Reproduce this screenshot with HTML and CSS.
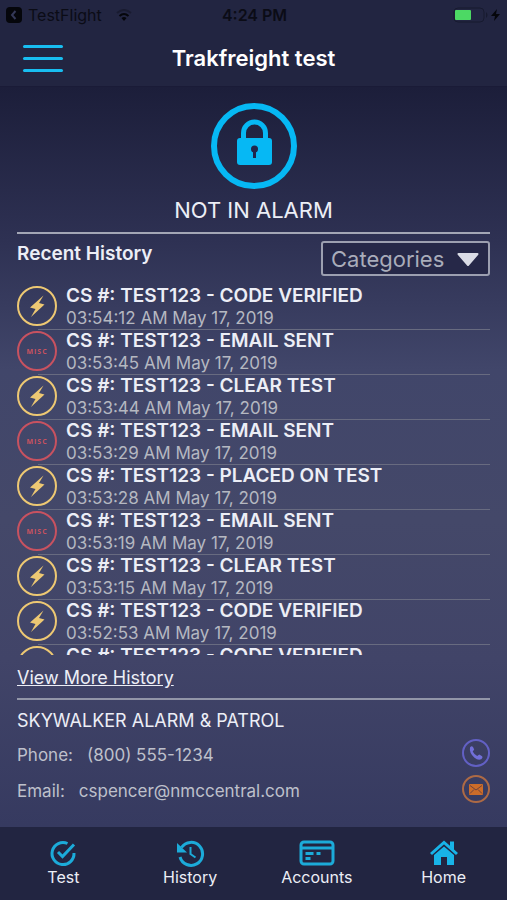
FILE: index.html
```html
<!DOCTYPE html>
<html lang="en">
<head>
<meta charset="utf-8">
<meta name="viewport" content="width=device-width, initial-scale=1">
<title>Trakfreight test</title>
<link rel="stylesheet" href="styles.css">
</head>
<body>
<svg class="sprite" aria-hidden="true">
  <symbol id="bolt" viewBox="0 0 40 40">
    <circle cx="20" cy="20" r="19" fill="none" stroke="currentColor" stroke-width="2"/>
    <path d="M26.500 9.500 13 21.500 18.500 23 14 31 27.500 18.500 22 17z" fill="currentColor"/>
  </symbol>
</svg>
<header class="top">
  <div class="status">
    <div class="status-side">
      <svg class="back-icon" viewBox="0 0 16 16" aria-hidden="true"><rect width="16" height="16" rx="4" fill="#05060b"/><path d="M9.500 4 6 8l3.500 4" fill="none" stroke="#343858" stroke-width="2"/></svg>
      <span>TestFlight</span>
      <svg class="wifi" viewBox="0 0 16 12" aria-hidden="true"><path d="M1 4Q8-2 15 4" fill="none" stroke="#191b30" stroke-width="2"/><path d="M3.500 7Q8 3 12.500 7" fill="none" stroke="#05060b" stroke-width="2"/><path d="M5.500 9Q8 7 10.500 9L8 12z" fill="#05060b"/></svg>
    </div>
    <time class="clock">4:24 PM</time>
    <div class="status-side status-end">
      <svg class="battery" viewBox="0 0 50 16" aria-hidden="true"><rect x="1" y="1" width="30" height="14" rx="4" fill="none" stroke="#171a2f"/><rect x="2" y="3" width="16" height="10" rx="1" fill="#4cd964"/><path d="M33 5q3 3 0 6z" fill="#171a2f"/><path d="M44 2 38 9h4l-1 5 6-7h-4z" fill="#05060b"/></svg>
    </div>
  </div>
  <div class="nav">
    <button class="menu" type="button" aria-label="Menu"><span></span><span></span><span></span></button>
    <h1>Trakfreight test</h1>
  </div>
</header>
<main>
  <section class="alarm">
    <svg class="lock" viewBox="0 0 86 86" aria-hidden="true">
      <circle cx="43" cy="43" r="40" fill="none" stroke="#06b8f4" stroke-width="6"/>
      <path d="M32.500 37V30a11 11 0 0 1 22 0v7" fill="none" stroke="#06b8f4" stroke-width="5"/>
      <rect x="26" y="35" width="35" height="27" rx="3" fill="#06b8f4"/>
      <circle cx="43.500" cy="46" r="3.500" fill="#22254a"/><path d="M42 47h3v8h-3z" fill="#22254a"/>
    </svg>
    <p>NOT IN ALARM</p>
  </section>
  <section class="history">
    <div class="history-head">
      <h2>Recent History</h2>
      <div class="picker">
        <select aria-label="Categories"><option>Categories</option></select>
        <svg viewBox="0 0 22 13" aria-hidden="true"><path d="M1.500 1h19L11 12z" fill="#dadce6" stroke="#dadce6" stroke-width="2" stroke-linejoin="round"/></svg>
      </div>
    </div>
    <ul class="events">
      <li><svg class="bolt"><use href="#bolt"/></svg><div><h3>CS #: TEST123 - CODE VERIFIED</h3><time>03:54:12 AM May 17, 2019</time></div></li>
      <li><span class="misc">MISC</span><div><h3>CS #: TEST123 - EMAIL SENT</h3><time>03:53:45 AM May 17, 2019</time></div></li>
      <li><svg class="bolt"><use href="#bolt"/></svg><div><h3>CS #: TEST123 - CLEAR TEST</h3><time>03:53:44 AM May 17, 2019</time></div></li>
      <li><span class="misc">MISC</span><div><h3>CS #: TEST123 - EMAIL SENT</h3><time>03:53:29 AM May 17, 2019</time></div></li>
      <li><svg class="bolt"><use href="#bolt"/></svg><div><h3>CS #: TEST123 - PLACED ON TEST</h3><time>03:53:28 AM May 17, 2019</time></div></li>
      <li><span class="misc">MISC</span><div><h3>CS #: TEST123 - EMAIL SENT</h3><time>03:53:19 AM May 17, 2019</time></div></li>
      <li><svg class="bolt"><use href="#bolt"/></svg><div><h3>CS #: TEST123 - CLEAR TEST</h3><time>03:53:15 AM May 17, 2019</time></div></li>
      <li><svg class="bolt"><use href="#bolt"/></svg><div><h3>CS #: TEST123 - CODE VERIFIED</h3><time>03:52:53 AM May 17, 2019</time></div></li>
      <li><svg class="bolt"><use href="#bolt"/></svg><div><h3>CS #: TEST123 - CODE VERIFIED</h3></div></li>
    </ul>
    <a class="more" href="#history">View More History</a>
  </section>
  <section class="contact">
    <h2>SKYWALKER ALARM &amp; PATROL</h2>
    <div class="contact-row">
      <span>Phone:</span><span>(800) 555-1234</span>
      <a href="tel:8005551234" aria-label="Call"><svg viewBox="0 0 28 28" aria-hidden="true"><circle cx="14" cy="14" r="13" fill="none" stroke="#6260c4" stroke-width="2"/><path d="M8 8.500q1.500-2 3-.5l1.200 2.500-1.500 2q1.500 3 4.500 4.500l2-1.500 3 1.700q1 1.500-1 3-3 1.500-7-1.700Q7 13.500 8 8.500z" fill="#716fd8"/></svg></a>
    </div>
    <div class="contact-row">
      <span>Email:</span><span>cspencer@nmccentral.com</span>
      <a href="mailto:cspencer@nmccentral.com" aria-label="Send email"><svg viewBox="0 0 28 28" aria-hidden="true"><circle cx="14" cy="14" r="13" fill="none" stroke="#ad6a45" stroke-width="2"/><rect x="7" y="9" width="14" height="11" rx="1" fill="#cc6c29"/><path d="M8 10.500l6 4.500 6-4.500M8 18.500l4-4M20 18.500l-4-4" fill="none" stroke="#6d433f"/></svg></a>
    </div>
  </section>
</main>
<nav class="tabs">
  <a href="#test"><svg viewBox="0 0 36 28" aria-hidden="true"><g fill="none" stroke="#1cabd9" stroke-width="3"><path d="M22.500 4.500A11 11 0 1 0 29 14"/><path d="M13 13l4.500 4.500L29 5.500"/></g></svg>Test</a>
  <a href="#history"><svg viewBox="0 0 36 28" aria-hidden="true"><g fill="none" stroke="#1cabd9" stroke-width="3"><path d="M9.500 8.500A11.500 11.500 0 1 1 8 18"/><path d="M18.500 8v7l5 3.500" stroke-width="2"/></g><path d="M5 4v9.500h10z" fill="#1cabd9"/></svg>History</a>
  <a href="#accounts"><svg viewBox="0 0 36 28" aria-hidden="true"><rect x="2" y="3" width="32" height="22" rx="3" fill="none" stroke="#1cabd9" stroke-width="3"/><path d="M2 9h32" stroke="#1cabd9" stroke-width="3"/><path d="M6.500 14.500h8M17.500 14.500h4M6.500 19.500h5" stroke="#1cabd9" stroke-width="3"/></svg>Accounts</a>
  <a href="#home"><svg viewBox="0 0 36 28" aria-hidden="true"><path d="M5 15 18 3.500 31 15" fill="none" stroke="#18b4e8" stroke-width="3"/><path d="M24 2.500h4v9l-4-4zM8 16 18 7.500 28 16v10h-7v-8h-6v8H8z" fill="#18b4e8"/></svg>Home</a>
</nav>
</body>
</html>
```
FILE: styles.css
```css
* { box-sizing: border-box; margin: 0; padding: 0; }

body {
  height: 100vh;
  display: flex;
  flex-direction: column;
  font-family: Inter, "Liberation Sans", sans-serif;
  font-size: 18px;
  color: #eceef6;
  background: linear-gradient(#1c1e3a 87px, #2e3153 240px, #41466a 370px, #444869 520px, #414468 660px, #363a60 826px);
}

a { color: inherit; text-decoration: none; }
svg { display: block; flex: none; }
.sprite { position: absolute; width: 0; height: 0; }

.top { background: #222541; border-bottom: 1px solid #1a1b37; }
.status {
  display: grid;
  grid-template-columns: 1fr auto 1fr;
  align-items: center;
  height: 30px;
  padding: 0 4px 0 6px;
  font-size: 16px;
  color: #0b0c16;
}
.status-side { display: flex; align-items: center; gap: 6px; }
.status-end { justify-content: flex-end; }
.back-icon { width: 16px; height: 16px; }
.wifi { width: 16px; height: 12px; margin-left: 8px; }
.battery { width: 50px; height: 16px; }
.clock { font-weight: 600; }

.nav {
  display: grid;
  grid-template-columns: 40px 1fr 40px;
  align-items: center;
  height: 56px;
  padding: 0 23px;
}
.menu { display: grid; gap: 9px; border: 0; background: none; }
.menu span { height: 3px; border-radius: 2px; background: #18bdf0; }
.nav h1 { font-size: 22px; font-weight: 600; text-align: center; color: #fff; }

main { flex: 1; min-height: 0; display: flex; flex-direction: column; padding: 16px 17px 0; }

.alarm {
  display: flex;
  flex-direction: column;
  align-items: center;
  gap: 7px;
  padding-bottom: 8px;
  border-bottom: 2px solid #a3a6b5;
}
.lock { width: 86px; height: 86px; }
.alarm p { font-size: 22px; line-height: 28px; }

.history { flex: 1; min-height: 0; display: flex; flex-direction: column; padding: 7px 0 8px; border-bottom: 2px solid #9296a8; }
.history-head { display: flex; justify-content: space-between; align-items: flex-start; }
.history-head h2 { font-size: 19px; line-height: 26px; font-weight: 600; }
.picker { position: relative; }
.picker select {
  appearance: none;
  width: 169px;
  height: 35px;
  padding: 0 8px;
  border: 2px solid #9c9fb0;
  border-radius: 3px;
  background: #262848;
  color: #a9acba;
  font: inherit;
  font-size: 22px;
}
.picker svg { position: absolute; right: 11px; top: 12px; width: 22px; height: 13px; pointer-events: none; }

.events { flex: 1; min-height: 0; overflow: hidden; list-style: none; margin-top: 9px; }
.events li { position: relative; display: flex; align-items: flex-start; gap: 9px; height: 45px; }
.events li::after { content: ""; position: absolute; left: 21px; right: 0; bottom: 0; height: 1px; background: #686b80; }
.events h3 { font-size: 19px; line-height: 22px; font-weight: 600; }
.events time { display: block; font-size: 17px; line-height: 22px; color: #b5b8c1; }
.bolt, .misc { flex: none; width: 40px; height: 40px; margin-top: 1px; }
.bolt { color: #edc873; }
.misc {
  display: grid;
  place-items: center;
  border: 2px solid #c85260;
  border-radius: 50%;
  color: #c85260;
  font: 700 7px "Open Sans", sans-serif;
  letter-spacing: 1px;
}
.more { align-self: flex-start; margin-top: 11px; font-size: 18px; line-height: 24px; text-decoration: underline; }

.contact { padding: 7px 0 20px; }
.contact h2 { font-size: 18px; line-height: 28px; font-weight: 400; }
.contact-row { display: flex; align-items: center; gap: 14px; height: 36px; font-size: 17px; color: #bec0cb; }
.contact-row span { padding-top: 4px; }
.contact-row a { margin-left: auto; }
.contact-row svg { width: 28px; height: 28px; }

.tabs { display: grid; grid-template-columns: repeat(4, 1fr); height: 73px; padding-top: 12px; background: #222541; }
.tabs a { display: flex; flex-direction: column; align-items: center; font-size: 16px; line-height: 20px; }
.tabs svg { width: 36px; height: 28px; }
```
